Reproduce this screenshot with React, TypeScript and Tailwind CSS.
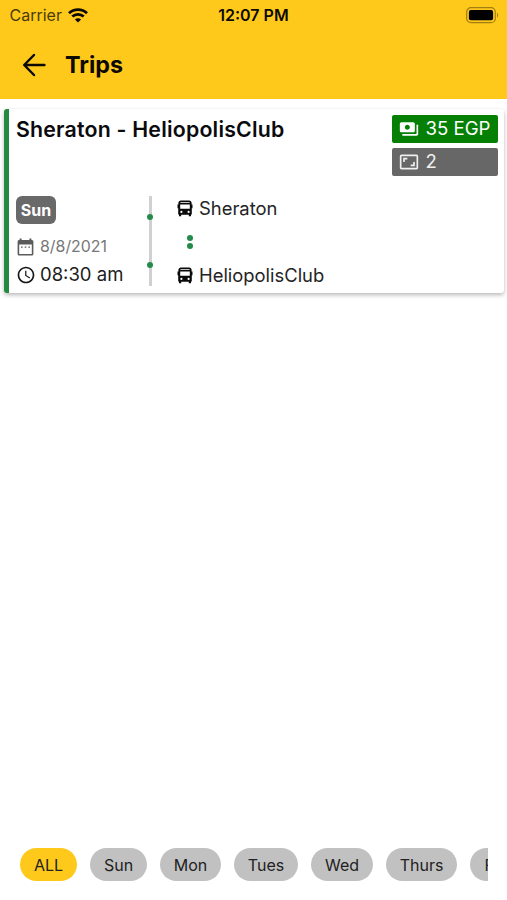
import type { ReactNode } from 'react'
import clsx from 'clsx'
import { MdAccessTime, MdAspectRatio, MdPayments } from 'react-icons/md'

const days = [
  { label: 'ALL', width: 'w-[57px]' },
  { label: 'Sun', width: 'w-[57px]' },
  { label: 'Mon', width: 'w-[61px]' },
  { label: 'Tues', width: 'w-[64px]' },
  { label: 'Wed', width: 'w-[62px]' },
  { label: 'Thurs', width: 'w-[71px]' },
  { label: 'Fri', width: 'w-[48px]' },
]

function WifiIcon() {
  return (
    <svg width="20" height="15" viewBox="0 0 20 15" fill="none" stroke="#0d0a02" strokeWidth="2.8">
      <path d="M1 5.2C6 .3 14 .3 19 5.2" />
      <path d="M4.3 8.6C7.5 5.5 12.5 5.5 15.7 8.6" />
      <path d="M10 14.4L6.9 11.4C8.6 9.8 11.4 9.8 13.1 11.4Z" fill="#0d0a02" stroke="none" />
    </svg>
  )
}

function BatteryIcon() {
  return (
    <svg width="33" height="17" viewBox="0 0 33 17" fill="none">
      <rect x=".7" y=".7" width="28.6" height="15" rx="4.3" stroke="#a17e12" strokeWidth="1.2" />
      <rect x="2.9" y="2.9" width="24.2" height="10.4" rx="2" fill="#000" />
      <path d="M31 5.8C32.6 6.5 32.6 9.9 31 10.6Z" fill="#a17e12" />
    </svg>
  )
}

function BackIcon() {
  return (
    <svg
      width="24"
      height="24"
      viewBox="0 0 24 24"
      fill="none"
      stroke="#0d0a02"
      strokeWidth="2.5"
      strokeLinecap="round"
      strokeLinejoin="round"
    >
      <path d="M12 2L2.2 12L12 22M2.6 12H22.4" />
    </svg>
  )
}

function CalendarIcon() {
  return (
    <svg width="17" height="18" viewBox="0 0 17 18" fill="#5c5c5c">
      <path
        fillRule="evenodd"
        d="M2.6 .5H4.6V2H12.4V.5H14.4V2H15Q16.4 2 16.4 3.5V16Q16.4 17.5 15 17.5H2Q.6 17.5 .6 16V3.5Q.6 2 2 2H2.6ZM2.2 6.6V15.9H14.8V6.6Z"
      />
      <path d="M4 8.4H5.6V9.8H4ZM7.7 8.4H9.3V9.8H7.7ZM11.4 8.4H13V9.8H11.4Z" />
    </svg>
  )
}

function BusIcon() {
  return (
    <svg width="16" height="17" viewBox="0 0 16 17" fill="#0a0a0a">
      <path
        fillRule="evenodd"
        d="M3.6 .4H12.4Q14.4 .7 14.6 2.6V4.6H15.5V8.2H14.8V14.6H14V16.3H11.8V14.8H4.2V16.3H2V14.6H1.2V8.2H.5V4.6H1.4V2.6Q1.6 .7 3.6 .4ZM3.4 2V2.7H12.6V2ZM3.2 4.4V8.8H12.8V4.4ZM4.4 10.8A1.1 1.1 0 1 0 4.4 13A1.1 1.1 0 1 0 4.4 10.8ZM11.6 10.8A1.1 1.1 0 1 0 11.6 13A1.1 1.1 0 1 0 11.6 10.8Z"
      />
    </svg>
  )
}

function Stop({ children }: { children: ReactNode }) {
  return (
    <div className="flex h-[25px] items-center gap-[6px]">
      <BusIcon />
      <span className="text-[18.4px] text-[#242424]">{children}</span>
    </div>
  )
}

function TripCard() {
  return (
    <section className="ml-[4px] mr-[3px] mt-[10px] flex h-[184px] rounded-[3px] border-l-[5px] border-[#25893f] bg-white shadow-[0_2px_4px_rgba(0,0,0,0.28)]">
      <div className="flex w-full flex-col pl-[7px] pr-[6.5px]">
        <div className="flex h-[87px] justify-between">
          <h2 className="mt-[6px] whitespace-nowrap text-[21.3px] leading-[28px] font-semibold tracking-[0.01em] text-[#0b0b0e]">
            Sheraton - HeliopolisClub
          </h2>
          <div className="mt-[6.4px] flex w-[106px] flex-col gap-[4.4px] text-[18.6px] text-white">
            <div className="flex h-[28px] items-center gap-[7px] rounded-[2px] bg-[#058005] pl-[7px]">
              <MdPayments className="size-5" />
              <span className="whitespace-nowrap">35 EGP</span>
            </div>
            <div className="flex h-[28px] items-center gap-[7px] rounded-[2px] bg-[#676767] pl-[7px] text-[#f0f0f0]">
              <MdAspectRatio className="size-5" />
              <span>2</span>
            </div>
          </div>
        </div>

        <div className="flex">
          <div className="flex w-[131px] flex-col items-start">
            <span className="flex h-[28px] w-10 items-center justify-center rounded-[6px] bg-[#696969] text-[16px] font-bold text-white">
              Sun
            </span>
            <div className="mt-[10px] flex h-[26px] items-center gap-[6px] pl-[1px] text-[#777]">
              <CalendarIcon />
              <span className="text-[15.9px]">8/8/2021</span>
            </div>
            <div className="mt-[1px] flex h-[28px] items-center gap-[4px] text-[#202020]">
              <MdAccessTime className="size-[20px] text-[#181818]" />
              <span className="whitespace-nowrap text-[18.5px]">08:30 am</span>
            </div>
          </div>

          {/* timeline rail with its two stops */}
          <div className="flex h-[90px] w-[6px] justify-center">
            <div className="flex w-[3px] flex-col items-center bg-[#d0d0d0] pt-[18px]">
              <span className="size-[6px] rounded-full bg-[#258a4b]" />
              <span className="mt-[42px] size-[6px] rounded-full bg-[#258a4b]" />
            </div>
          </div>

          <div className="ml-[24px] flex h-[92px] flex-col justify-between">
            <Stop>Sheraton</Stop>
            <div className="ml-[10px] flex flex-col gap-[2px]">
              <span className="size-[6px] rounded-full bg-[#258a4b]" />
              <span className="size-[6px] rounded-full bg-[#258a4b]" />
            </div>
            <Stop>HeliopolisClub</Stop>
          </div>
        </div>
      </div>
    </section>
  )
}

export default function App() {
  return (
    <main className="flex h-[900px] w-[507px] flex-col overflow-hidden bg-white font-['Inter',sans-serif]">
      <header className="h-[99px] bg-[#ffc91b] text-[#0d0a02]">
        <div className="grid h-[30px] grid-cols-3 items-center pl-[9.5px] pr-[7.5px]">
          <div className="flex items-center gap-[6px] text-[16px] text-[#4a3b08]">
            Carrier
            <WifiIcon />
          </div>
          <span className="-ml-[2px] text-center text-[16px] font-semibold">12:07 PM</span>
          <div className="flex justify-end">
            <BatteryIcon />
          </div>
        </div>
        <div className="flex h-[70px] items-center gap-[19px] pl-[22px]">
          <BackIcon />
          <h1 className="pt-px text-[23.3px] font-bold">Trips</h1>
        </div>
      </header>

      <TripCard />

      <nav className="mt-auto mb-[19px] mr-[19px] ml-5 flex gap-[13px] overflow-hidden">
        {days.map((day, i) => (
          <button
            key={day.label}
            className={clsx(
              'h-[33px] shrink-0 rounded-full text-[16px] text-[#222]',
              day.width,
              i === 0 ? 'bg-[#ffc91b]' : 'bg-[#c1c1c1]',
            )}
          >
            {day.label}
          </button>
        ))}
      </nav>
    </main>
  )
}
